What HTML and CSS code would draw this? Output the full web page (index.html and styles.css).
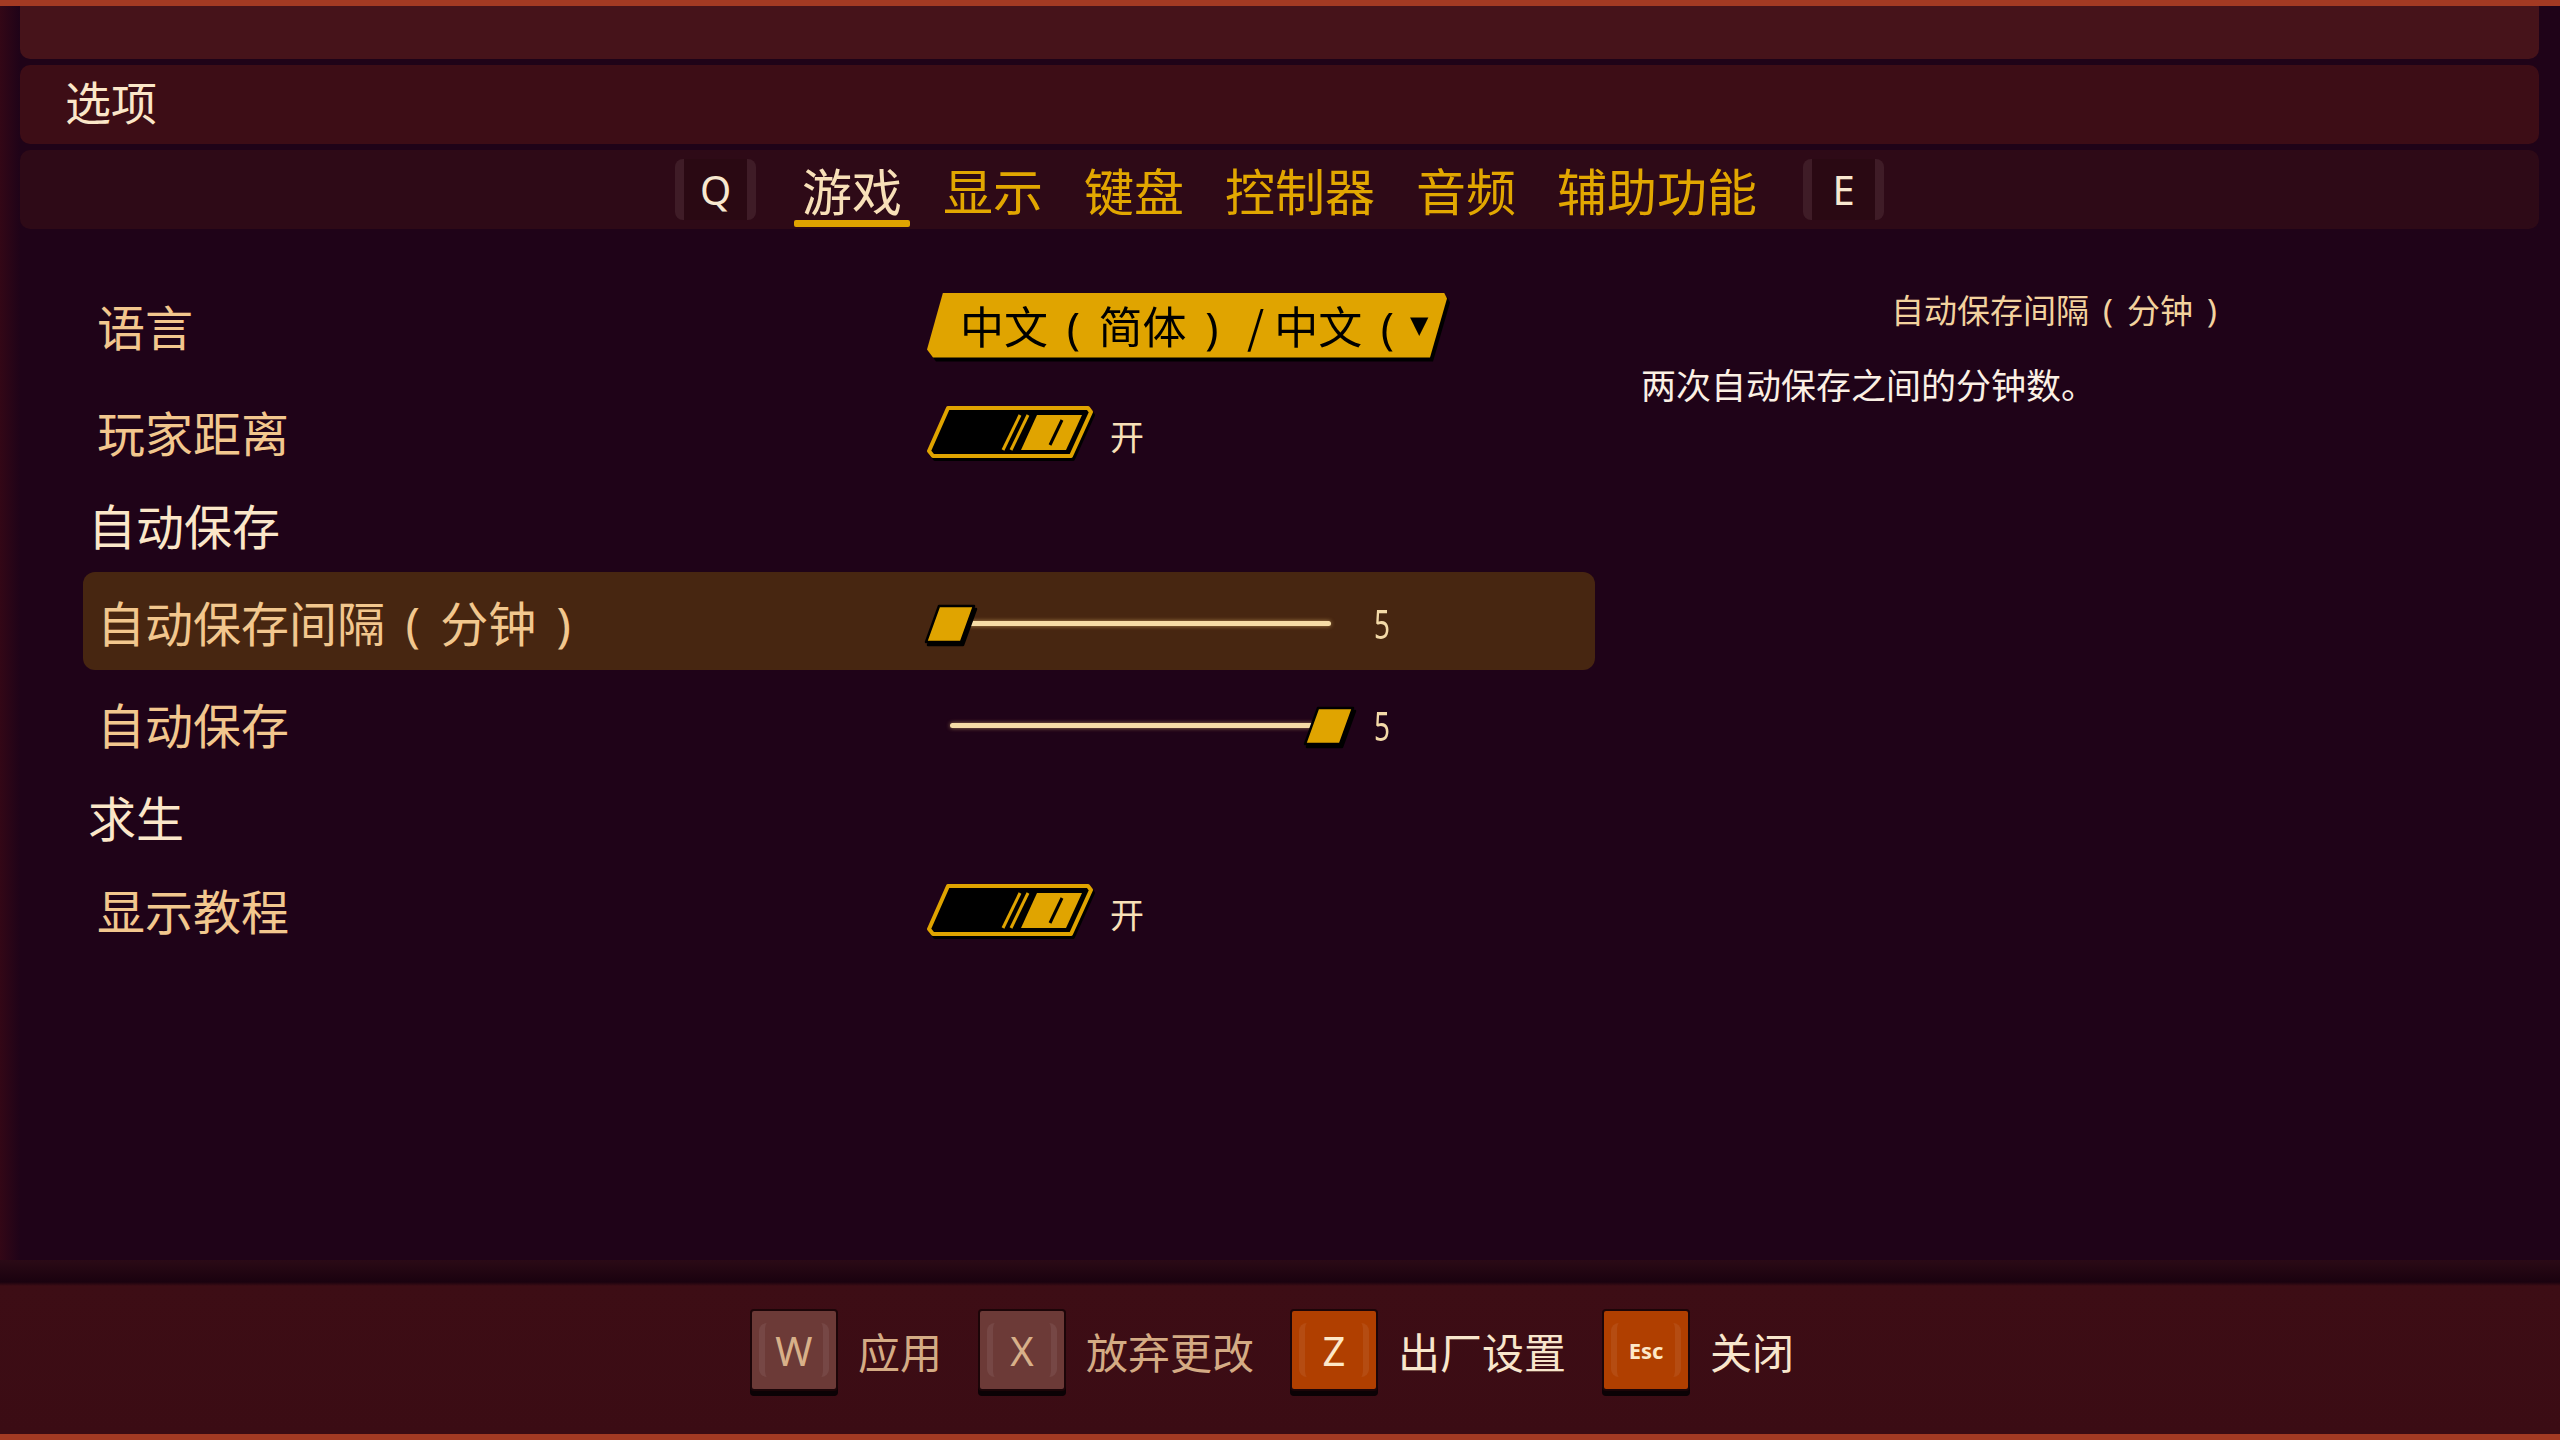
FILE: index.html
```html
<!DOCTYPE html>
<html lang="zh-CN">
  <head>
    <meta charset="UTF-8" />
    <meta name="viewport" content="width=device-width, initial-scale=1.0" />
    <title>选项</title>
    <link rel="stylesheet" href="styles.css">
  </head>
  <body>
    <div class="screen">
      <div class="topbar"></div>
      <header class="title-bar">选项</header>

      <nav class="tabs">
        <span class="tab-key key-left">Q</span>
        <span class="tab active">游戏</span>
        <span class="tab">显示</span>
        <span class="tab">键盘</span>
        <span class="tab">控制器</span>
        <span class="tab">音频</span>
        <span class="tab">辅助功能</span>
        <span class="tab-key key-right">E</span>
      </nav>

      <main class="content">
        <section class="settings">
          <div class="row">
            <span class="label">语言</span>
            <div class="dropdown">
              <div class="dropdown-body">
                <span class="dropdown-text">中文<span class="paren">(</span>简体<span class="paren">)</span> / 中文<span class="paren">(</span></span>
                <span class="dropdown-arrow">▼</span>
              </div>
            </div>
          </div>

          <div class="row">
            <span class="label">玩家距离</span>
            <svg class="toggle" width="170" height="56" viewBox="0 0 170 56">
              <polygon points="24,3 164,3 167,7 147,51 9,51 5,46" fill="#000" stroke="#e0a400" stroke-width="4" stroke-linejoin="round" />
              <line x1="96" y1="10" x2="79" y2="45" stroke="#e0a400" stroke-width="3" />
              <line x1="104" y1="10" x2="87" y2="45" stroke="#e0a400" stroke-width="3" />
              <polygon points="113,10 158,10 142,45 97,45" fill="#e0a400" />
              <line x1="138" y1="15" x2="126" y2="40" stroke="#000" stroke-width="3" />
            </svg>
            <span class="toggle-state">开</span>
          </div>

          <div class="group">自动保存</div>

          <div class="row selected">
            <span class="label">自动保存间隔<span class="paren">(</span>分钟<span class="paren">)</span></span>
            <div class="slider">
              <div class="track"></div>
              <svg class="handle at-min" width="52" height="40" viewBox="0 0 52 40">
                <polygon points="15,2 50,2 37,38 2,38" fill="#e0a400" stroke="#000" stroke-width="2.5" stroke-linejoin="round" />
              </svg>
            </div>
            <span class="value">5</span>
          </div>

          <div class="row">
            <span class="label">自动保存</span>
            <div class="slider">
              <div class="track"></div>
              <svg class="handle at-max" width="52" height="40" viewBox="0 0 52 40">
                <polygon points="15,2 50,2 37,38 2,38" fill="#e0a400" stroke="#000" stroke-width="2.5" stroke-linejoin="round" />
              </svg>
            </div>
            <span class="value">5</span>
          </div>

          <div class="group">求生</div>

          <div class="row">
            <span class="label">显示教程</span>
            <svg class="toggle" width="170" height="56" viewBox="0 0 170 56">
              <polygon points="24,3 164,3 167,7 147,51 9,51 5,46" fill="#000" stroke="#e0a400" stroke-width="4" stroke-linejoin="round" />
              <line x1="96" y1="10" x2="79" y2="45" stroke="#e0a400" stroke-width="3" />
              <line x1="104" y1="10" x2="87" y2="45" stroke="#e0a400" stroke-width="3" />
              <polygon points="113,10 158,10 142,45 97,45" fill="#e0a400" />
              <line x1="138" y1="15" x2="126" y2="40" stroke="#000" stroke-width="3" />
            </svg>
            <span class="toggle-state">开</span>
          </div>
        </section>

        <aside class="info">
          <div class="info-title">自动保存间隔<span class="paren">(</span>分钟<span class="paren">)</span></div>
          <p class="info-text">两次自动保存之间的分钟数。</p>
        </aside>
      </main>

      <footer class="actions">
        <div class="action">
          <span class="key">W</span>
          <span class="action-label dim">应用</span>
        </div>
        <div class="action">
          <span class="key">X</span>
          <span class="action-label dim">放弃更改</span>
        </div>
        <div class="action">
          <span class="key hot">Z</span>
          <span class="action-label">出厂设置</span>
        </div>
        <div class="action">
          <span class="key hot esc">Esc</span>
          <span class="action-label">关闭</span>
        </div>
      </footer>
    </div>
  </body>
</html>
```

FILE: styles.css
```css
body {
  margin: 0;
  background-color: #1f0318;
  font-family: "Noto Sans CJK SC", "Noto Sans", sans-serif;
}

.screen {
  width: 2560px;
  height: 1440px;
  box-sizing: border-box;
  border-top: 6px solid #a33a23;
  display: flex;
  flex-direction: column;
  background: linear-gradient(to right, #330716 0, #1f0318 20px);
}

.topbar {
  height: 53px;
  margin: 0 21px 0 20px;
  background-color: #46131a;
  border-radius: 0 0 10px 10px;
}

.title-bar {
  height: 79px;
  margin: 6px 21px 0 20px;
  padding: 0 0 10px 45px;
  box-sizing: border-box;
  display: flex;
  align-items: center;
  background-color: #3d0d16;
  border-radius: 10px;
  font-size: 46px;
  color: #fbe6c8;
}

.tabs {
  height: 79px;
  margin: 6px 21px 0 20px;
  display: flex;
  justify-content: center;
  align-items: center;
  gap: 25px;
  background-color: #2e0a17;
  border-radius: 10px;
}

.tab {
  position: relative;
  height: 100%;
  padding: 0 8px 2px;
  box-sizing: border-box;
  display: flex;
  align-items: center;
  font-size: 50px;
  color: #e2a700;
}

.tab.active {
  color: #f8e0b8;
}

.tab.active::after {
  content: "";
  position: absolute;
  left: 0;
  right: 0;
  bottom: 2px;
  height: 7px;
  border-radius: 2px;
  background-color: #e0a400;
}

.tab-key {
  width: 81px;
  height: 61px;
  box-sizing: border-box;
  display: flex;
  align-items: center;
  justify-content: center;
  border-left: 9px solid #3f1c27;
  border-right: 9px solid #3f1c27;
  border-radius: 8px;
  background-color: #2a0913;
  font-family: "Noto Sans", sans-serif;
  font-size: 40px;
  color: #f8e8d0;
}

.key-left {
  margin-right: 13px;
}

.key-right {
  margin-left: 13px;
}

.paren {
  display: inline-block;
  width: 1.15em;
  text-align: center;
  font-family: "Noto Sans", sans-serif;
}

.content {
  flex: 1;
  display: flex;
  padding-left: 83px;
}

.settings {
  width: 1512px;
  padding-top: 47px;
  display: flex;
  flex-direction: column;
  gap: 8px;
}

.row {
  height: 98px;
  padding-left: 14px;
  display: flex;
  align-items: center;
  border-radius: 12px;
}

.row.selected {
  margin: 4px 0 -4px;
  background-color: #472611;
}

.label {
  width: 827px;
  flex-shrink: 0;
  font-size: 48px;
  color: #f2c78e;
}

.group {
  height: 72px;
  padding-left: 5px;
  display: flex;
  align-items: center;
  font-size: 48px;
  color: #fbe7c9;
}

.dropdown {
  margin-left: 3px;
  filter: drop-shadow(3px 4px 0 #000);
}

.dropdown-body {
  width: 520px;
  height: 65px;
  padding-left: 33px;
  box-sizing: border-box;
  display: flex;
  align-items: center;
  background-color: #e0a400;
  clip-path: polygon(16px 0, calc(100% - 3px) 0, 100% 6px, calc(100% - 17px) 100%, 6px 100%, 0 calc(100% - 8px));
}

.dropdown-text {
  width: 450px;
  overflow: hidden;
  white-space: nowrap;
  font-size: 44px;
  color: #000;
}

.dropdown-arrow {
  font-family: "DejaVu Sans", sans-serif;
  font-size: 24px;
  color: #000;
}

.toggle {
  display: block;
  margin-top: 4px;
  filter: drop-shadow(2px 3px 0 #000);
}

.toggle-state {
  margin: 8px 0 0 16px;
  font-size: 34px;
  color: #f8e0b8;
}

.slider {
  position: relative;
  width: 431px;
  height: 44px;
  margin-top: 6px;
}

.track {
  position: absolute;
  left: 26px;
  right: 24px;
  top: 19px;
  height: 5px;
  border-radius: 3px;
  background-color: #f6dca6;
  box-shadow: 0 0 4px rgba(246, 200, 120, 0.6);
}

.handle {
  position: absolute;
  top: 2px;
  filter: drop-shadow(2px 3px 0 #000);
}

.handle.at-min {
  left: 0;
}

.handle.at-max {
  right: 0;
}

.value {
  margin: 4px 0 0 19px;
  display: inline-block;
  transform: scaleX(0.7);
  transform-origin: left center;
  font-family: "Noto Sans", sans-serif;
  font-size: 40px;
  color: #f3d9a8;
}

.info {
  width: 820px;
  margin-left: 46px;
  padding-top: 56px;
}

.info-title {
  text-align: center;
  padding-left: 20px;
  font-size: 33px;
  line-height: 48px;
  color: #f2d29e;
}

.info-text {
  margin: 24px 0 0;
  font-size: 35px;
  line-height: 50px;
  color: #fbf0e4;
}

.actions {
  height: 180px;
  box-sizing: border-box;
  padding: 49px 16px 0 0;
  border-bottom: 6px solid #a33a23;
  display: flex;
  justify-content: center;
  align-items: flex-start;
  gap: 36px;
  background: linear-gradient(to bottom, #2b0a16 0, #1a020f 22px, #3d0d15 26px, #3b0c14 100%);
}

.action {
  display: flex;
  align-items: center;
}

.key {
  position: relative;
  width: 88px;
  height: 82px;
  box-sizing: border-box;
  display: flex;
  align-items: center;
  justify-content: center;
  background-color: #6c3a37;
  border: 2px solid #1c0508;
  border-radius: 4px;
  box-shadow: 0 5px 0 #0b0205;
  font-family: "Noto Sans", sans-serif;
  font-size: 40px;
  color: #d8b089;
}

.key::before {
  content: "";
  position: absolute;
  top: 12px;
  bottom: 12px;
  left: 7px;
  right: 7px;
  border-left: 6px solid rgba(255, 255, 255, 0.07);
  border-right: 6px solid rgba(255, 255, 255, 0.07);
  border-radius: 8px;
}

.key.hot {
  background-color: #b03f00;
  color: #fde8c8;
}

.key.esc {
  font-size: 22px;
  font-weight: bold;
}

.action-label {
  margin-left: 20px;
  font-size: 42px;
  color: #f8e6cc;
}

.action-label.dim {
  color: #d4ab84;
}
```
